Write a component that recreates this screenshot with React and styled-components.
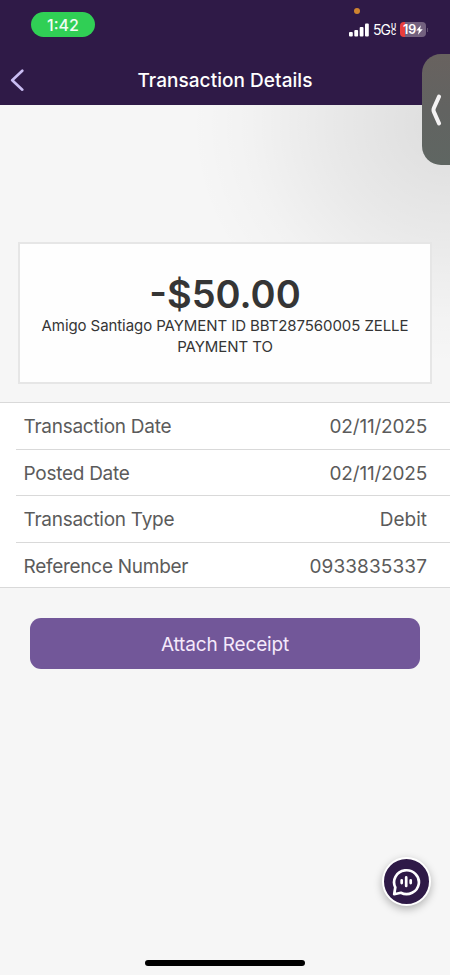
import styled, { createGlobalStyle } from "styled-components";

const details = [
  { label: "Transaction Date", value: "02/11/2025", valueSpacing: -0.2 },
  { label: "Posted Date", value: "02/11/2025", valueSpacing: -0.2 },
  { label: "Transaction Type", value: "Debit", valueSpacing: 0 },
  { label: "Reference Number", value: "0933835337", valueSpacing: 0.1 },
];

const App = () => {
  return (
    <>
      <GlobalStyle />
      <Screen>
        <Header>
          <StatusBar>
            <Time>1:42</Time>
            <Status>
              <MicDot />
              <Signal viewBox="0 0 20 14">
                <rect x="0" y="9" width="3.8" height="4.5" rx="1" />
                <rect x="5.3" y="7" width="3.8" height="6.5" rx="1" />
                <rect x="10.7" y="4" width="3.8" height="9.5" rx="1" />
                <rect x="16" y="0.5" width="3.8" height="13" rx="1" />
              </Signal>
              <Network>5G</Network>
              <Carrier>UC</Carrier>
              <Battery>
                19
                <Bolt viewBox="0 0 8 11">
                  <path d="M5.6 0 0.3 6.1h3L2.2 11 7.7 4.6H4.6z" />
                </Bolt>
              </Battery>
              <BatteryTip />
            </Status>
          </StatusBar>
          <NavBar>
            <BackButton aria-label="Back">
              <svg width="14" height="24" viewBox="0 0 14 24">
                <path d="M12.3 2.7 2.2 12.2l10.1 9.5" />
              </svg>
            </BackButton>
            <Title>Transaction Details</Title>
          </NavBar>
        </Header>

        <Content>
          <Summary>
            <Amount>-$50.00</Amount>
            <Description>
              Amigo Santiago PAYMENT ID BBT287560005 ZELLE
              <br />
              PAYMENT TO
            </Description>
          </Summary>
          <List>
            {details.map((item) => {
              return (
                <Row key={item.label}>
                  <Label>{item.label}</Label>
                  <Value $spacing={item.valueSpacing}>{item.value}</Value>
                </Row>
              );
            })}
          </List>
          <AttachButton>Attach Receipt</AttachButton>
        </Content>

        <SideTab aria-label="Show panel">
          <svg width="12" height="32" viewBox="0 0 12 32">
            <path d="M9 2.6 4 13.8q-1 2.2 0 4.4L9 29.4" />
          </svg>
        </SideTab>
        <ChatButton aria-label="Chat">
          <svg width="30" height="30" viewBox="0 0 30 30">
            <path d="M3.2 27.2 4.3 20.3A12.4 11.9 0 1 1 9.9 25.8Z" />
            <path d="M10.7 13.3v2.8M15.2 10.4v8.6M19.7 13.3v2.8" />
          </svg>
        </ChatButton>
        <HomeIndicator />
      </Screen>
    </>
  );
};

const GlobalStyle = createGlobalStyle`
  * {
    box-sizing: border-box;
  }

  body {
    margin: 0;
    font-family: Inter, "Liberation Sans", sans-serif;
  }

  button {
    border: none;
    padding: 0;
    font-family: inherit;
    cursor: pointer;
  }
`;

const Screen = styled.div`
  position: relative;
  display: flex;
  flex-direction: column;
  width: 450px;
  height: 975px;
  overflow: hidden;
  background-color: #f6f6f6;
`;

const Header = styled.header`
  height: 105px;
  background-color: #2f1a47;
  color: white;
`;

const StatusBar = styled.div`
  display: flex;
  justify-content: space-between;
  align-items: flex-start;
  height: 54px;
  padding: 12px 22px 0 31px;
`;

const Time = styled.div`
  width: 64px;
  height: 25px;
  border-radius: 13px;
  background-color: #30cf55;
  color: #effcf2;
  font-size: 16px;
  font-weight: 500;
  line-height: 26px;
  text-align: center;
`;

const Status = styled.div`
  position: relative;
  display: flex;
  align-items: center;
  height: 15px;
  margin-top: 10px;
`;

const MicDot = styled.div`
  position: absolute;
  top: -14px;
  left: 5px;
  width: 6px;
  height: 6px;
  border-radius: 50%;
  background-color: #cf8430;
`;

const Signal = styled.svg`
  width: 20px;
  height: 14px;
  margin-right: 4px;
  fill: white;
`;

const Network = styled.span`
  width: 18px;
  font-size: 14px;
  letter-spacing: -1px;
  line-height: 15px;
`;

const Carrier = styled.span`
  width: 5px;
  margin-right: 4px;
  font-size: 7px;
  font-weight: 600;
  line-height: 6px;
  word-break: break-all;
`;

const Battery = styled.div`
  display: flex;
  justify-content: center;
  align-items: center;
  width: 26px;
  height: 15px;
  border-radius: 4px;
  background: linear-gradient(to right, #e83d3d 5px, #73617f 5px);
  font-size: 12.5px;
  font-weight: 600;
  letter-spacing: -0.2px;
`;

const Bolt = styled.svg`
  width: 7px;
  height: 10px;
  fill: white;
`;

const BatteryTip = styled.div`
  width: 1px;
  height: 4px;
  margin-left: 1px;
  background-color: #604f70;
`;

const NavBar = styled.div`
  display: grid;
  grid-template-columns: 44px 1fr 44px;
  align-items: center;
  height: 51px;
`;

const BackButton = styled.button`
  display: flex;
  padding-left: 10px;
  background: none;

  path {
    fill: none;
    stroke: #cabdf3;
    stroke-width: 2.6;
    stroke-linecap: round;
    stroke-linejoin: round;
  }
`;

const Title = styled.h1`
  margin: 2px 0 0;
  font-size: 19px;
  font-weight: 500;
  letter-spacing: 0.05px;
  line-height: 24px;
  text-align: center;
  white-space: nowrap;
`;

const Content = styled.main`
  flex: 1;
  display: flex;
  flex-direction: column;
  padding-top: 137px;
  background: radial-gradient(
    ellipse 260px 240px at 450px 20px,
    rgba(0, 0, 0, 0.1),
    rgba(0, 0, 0, 0.055) 45%,
    rgba(0, 0, 0, 0.015) 78%,
    transparent
  );
`;

const Summary = styled.section`
  height: 142px;
  margin: 0 18px;
  padding-top: 29px;
  border: 2px solid #e6e6e6;
  background-color: #fefefe;
  color: #353535;
  text-align: center;
`;

const Amount = styled.div`
  font-size: 38px;
  font-weight: 600;
  line-height: 42px;
`;

const Description = styled.p`
  margin: 0;
  font-size: 15px;
  letter-spacing: -0.08px;
  line-height: 21px;
  white-space: nowrap;
`;

const List = styled.ul`
  margin: 18px 0 0;
  padding: 0;
  border-top: 1px solid #d9d9d9;
  border-bottom: 1px solid #d9d9d9;
  background-color: white;
  list-style: none;
`;

const Row = styled.li`
  display: flex;
  justify-content: space-between;
  align-items: center;
  height: 46.5px;
  margin-left: 16px;
  padding: 1.5px 23px 0 7.5px;
  border-bottom: 1px solid #d9d9d9;
  color: #5b5b5b;
  font-size: 19px;

  &:last-child {
    height: 44.5px;
    padding-top: 2.5px;
    border-bottom: none;
  }
`;

const Label = styled.span`
  letter-spacing: -0.27px;
`;

const Value = styled.span`
  letter-spacing: ${({ $spacing }) => $spacing}px;
`;

const AttachButton = styled.button`
  height: 51px;
  margin: 30px 30px 0;
  padding-top: 2px;
  border-radius: 11px;
  background-color: #725799;
  color: #f5e9fb;
  font-size: 19px;
  letter-spacing: -0.15px;
`;

const SideTab = styled.button`
  position: absolute;
  top: 54px;
  right: 0;
  display: flex;
  align-items: center;
  width: 28px;
  height: 111px;
  padding-left: 8px;
  border-radius: 19px 0 0 19px;
  background: linear-gradient(#68625f, #626361 50%, #5f6662);

  path {
    fill: none;
    stroke: #f4f2f3;
    stroke-width: 4;
    stroke-linecap: round;
    stroke-linejoin: round;
  }
`;

const ChatButton = styled.button`
  position: absolute;
  top: 857px;
  left: 382px;
  display: flex;
  justify-content: center;
  align-items: center;
  width: 49px;
  height: 49px;
  padding-right: 2px;
  border: 2px solid white;
  border-radius: 50%;
  background-color: #2f1a47;
  box-shadow: 0 3px 8px rgba(0, 0, 0, 0.28);

  path {
    fill: none;
    stroke: white;
    stroke-width: 2.7;
    stroke-linecap: round;
    stroke-linejoin: round;
  }
`;

const HomeIndicator = styled.div`
  position: absolute;
  bottom: 9px;
  left: 145px;
  width: 160px;
  height: 6px;
  border-radius: 3px;
  background-color: black;
`;

export default App;
